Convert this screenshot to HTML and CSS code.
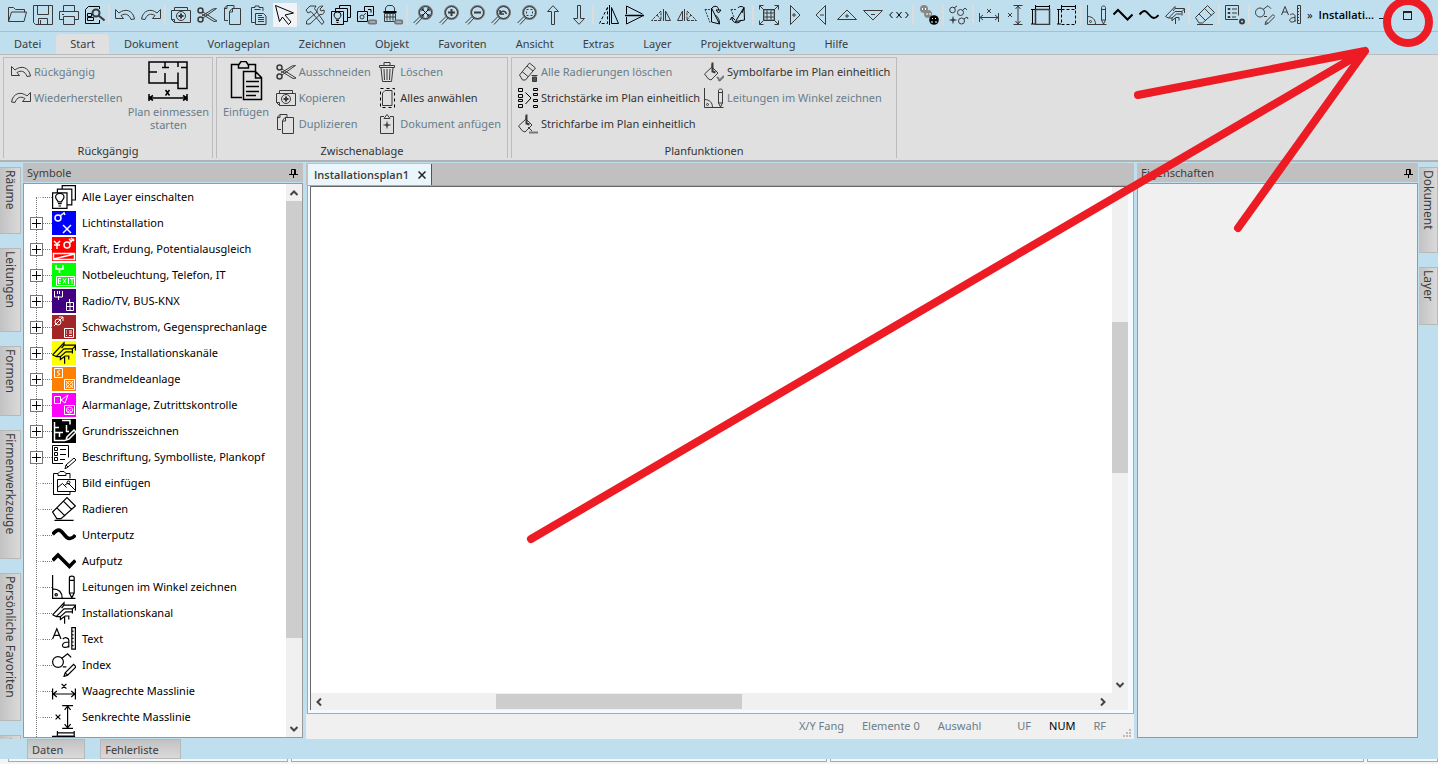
FILE: index.html
```html
<!DOCTYPE html>
<html lang="de">
<head>
<meta charset="utf-8">
<title>Installationsplan1</title>
<link rel="stylesheet" href="styles.css">
</head>
<body>
<svg class="defs" aria-hidden="true">
<symbol id="open" viewBox="0 0 20 20"><path d="M1.500 16.500V2.500h5l2 2h9v3M1.500 16.500l3-9.500h15l-2.500 9.500z"/></symbol>
<symbol id="save" viewBox="0 0 20 20"><path d="M.5.500h19v19H2.500l-2-2zM4.500.500v9h11v-9M5.500 19.500v-6h9v6M7.500 15v4"/></symbol>
<symbol id="print" viewBox="0 0 20 20"><path d="M4.500 6.500v-6h11v6M4.500 14.500h-4v-8h19v8h-4M4.500 11.500h11v8h-11zM3 9.500h2"/></symbol>
<symbol id="preview" viewBox="0 0 20 20"><path d="M14.500 15v3.500H.5v-14l3-3h11V4M2.500 8.500h4v3h-4zM2.500 12.500h6v3h-6z" class="dk"/><circle cx="11" cy="8" r="3.500" class="w2"/><path d="M13.500 10.500l6 5" class="w2"/></symbol>
<symbol id="undo" viewBox="0 0 20 20"><path d="M.5 4.500v9h8l-2.500-3c4-2.500 8-1.500 10 4l3.500-.5C18 5 10 3 4 8z"/></symbol>
<symbol id="redo" viewBox="0 0 20 20"><path d="M19.500 4.500v9h-8l2.500-3c-4-2.500-8-1.500-10 4L.5 14C2 5 10 3 16 8z"/></symbol>
<symbol id="copy" viewBox="0 0 20 20"><path d="M.5 5.500h19v12h-16l-3-3zM3.500 5.500v-3h13v3M.5 14.500h3v3" /><circle cx="10" cy="11" r="4.500"/><path d="M10 8.500v5M7.500 11h5" class="w2"/></symbol>
<symbol id="cut" viewBox="0 0 20 20"><circle cx="3.500" cy="5.500" r="2.500" class="w15"/><circle cx="3.500" cy="14.500" r="2.500" class="w15"/><path d="M6 7l14 9-3 .5L5 9M6 13L19.500 3.500 16 4 5 11"/></symbol>
<symbol id="dup" viewBox="0 0 20 20"><path d="M5 15.500H1.500V3l2.500-2.500h7V4M6.500 6.500l2.500-3h8.500v16h-11zM6.500 7h3V3.500M1.500 3.500H4v-3"/></symbol>
<symbol id="paste" viewBox="0 0 20 20"><path d="M6 17.500H2.500v-15H6V1h4v1.500h4V6M5.500 4.500h6M6.500 8.500h8l2.500 2.500v8.500H6.500zM9 10.500h4M9 12.500h6M9 14.500h6M9 16.500h6"/></symbol>
<symbol id="cursor" viewBox="0 0 20 20"><path d="M.5.500l4 16 3-4.500 6 7.500 2.500-2.500-6-7 8.500-2z" class="dk"/></symbol>
<symbol id="tools" viewBox="0 0 20 20"><path d="M1 5l4-4h6l-1.500 2.500L19 17l-2 2.500L6 6.500 3 8zM18 1l-3 3 1 2 3-1c1 3-1 5-4 4.500L5 19H1.500v-3L12 7c0-4 2-6 6-6z"/></symbol>
<symbol id="layers" viewBox="0 0 20 20"><path d="M.5 6.500h12v13H.5zM4.500 6V3.500h12v13H13M8.500 3V.5h11v12H17" class="dk"/><path d="M5 14c0-1-2-2-2-4a3.500 3 0 0 1 7 0c0 2-2 3-2 4zM5 15.500h3M5.500 17.500h2" class="dk"/></symbol>
<symbol id="laylock" viewBox="0 0 20 20"><path d="M.5 6.500h10v10H.5zM7.500 6V1.500h9v9H11M11 4.500h3v3" class="dk"/><circle cx="5" cy="12" r="2"/><path d="M6.500 10.500L9 8"/><rect x="11.500" y="15.500" width="8" height="3" rx="1.500" class="g w2"/></symbol>
<symbol id="lock" viewBox="0 0 20 20"><path d="M2.500 6V3l2-2.500h5l2 2.500v3M1.500 8.500h11v8h-11zM4 8.500v7M7 8.500v7M10 8.500v7M2 12h10"/><path d="M.5 7h13" class="bold"/><rect x="12" y="15.500" width="7.500" height="3" rx="1.500" class="g w2"/></symbol>
<symbol id="glass" viewBox="0 0 20 20"><circle cx="12.500" cy="7.500" r="6.500" class="g w2"/><circle cx="12.500" cy="7.500" r="6"/><path d="M7 11.500L.5 18M9 13l-6 6.500"/></symbol>
<symbol id="zfit" viewBox="0 0 20 20"><use href="#glass"/><path d="M9.500 4.500l6 6M15.500 4.500l-6 6M9 6V4h2M14 4h2v2M16 9v2h-2M11 11H9V9" class="dk"/></symbol>
<symbol id="zin" viewBox="0 0 20 20"><use href="#glass"/><path d="M9 7.500h7M12.500 4v7" class="w2"/></symbol>
<symbol id="zout" viewBox="0 0 20 20"><use href="#glass"/><path d="M9 7.500h7" class="w2"/></symbol>
<symbol id="zback" viewBox="0 0 20 20"><use href="#glass"/><path d="M9 5v4h4M9.500 8c2-3 5-2 6 1" class="w15"/></symbol>
<symbol id="zsel" viewBox="0 0 20 20"><use href="#glass"/><rect x="9.500" y="4.500" width="6" height="6" stroke-dasharray="2 2"/></symbol>
<symbol id="up" viewBox="0 0 20 20"><path d="M8.500 19.500v-13h-4L10 .7l5.500 5.800h-4v13z"/></symbol>
<symbol id="down" viewBox="0 0 20 20"><path d="M8.500.500v13h-4l5.500 5.800 5.500-5.800h-4V.500z"/></symbol>
<symbol id="mirh" viewBox="0 0 20 20"><path d="M10.500 0v20M12.500 2.500l7 16h-7z" class="dk"/><path d="M8.500 2.500l-8 16h8z" stroke-dasharray="3 2" class="dk"/></symbol>
<symbol id="mirv" viewBox="0 0 20 20"><path d="M0 10.500h19" class="dk w15"/><path d="M1.500 9V1l16 8M1.500 12v7l16-8" class="dk"/></symbol>
<symbol id="mirl" viewBox="0 0 20 20"><path d="M12.500 4v12M14.500 6l5 9.500h-5z"/><path d="M10 6L.5 15.500H10zM6 10l4 5" stroke-dasharray="3 1"/></symbol>
<symbol id="mirr" viewBox="0 0 20 20"><path d="M7.500 4v12M5.500 6l-5 9.500h5z"/><path d="M10 6l9.500 9.500H10zM14 10l-4 5" stroke-dasharray="3 1"/></symbol>
<symbol id="rotl" viewBox="0 0 20 20"><path d="M2 4.500h6M2 4.500l5 13" stroke-dasharray="2 1"/><path d="M8.500 3v14l8 2zM9 3c2-3 7-2 6.500 2M13 5h5l-2.500 3zM12.500 10c2 2 4 4 4 9" class="dk"/></symbol>
<symbol id="rotr" viewBox="0 0 20 20"><path d="M2 4.500h6M2 4.500l3 8" stroke-dasharray="2 1"/><path d="M15 2.500L6.500 16.500l9-1.500zM9 3c1-2 5-2 6 0l-2 5M3 13c0 6 8 6 9 2M1 15l2-3 3 3" class="dk"/></symbol>
<symbol id="scale" viewBox="0 0 20 20"><path d="M.5 4.500v-4h4M.5.500l5 5M15.500.500h4v4M19.500.500l-5 5M.5 15.500v4h4M.5 19.500l5-5M19.500 15.500v4h-4M19.500 19.500l-5-5M4.500 4.500h11v11h-11zM8 4v12M12 4v12M4 8h12M4 12h12"/><path d="M5.500 5.500h9v9h-9z" class="g" stroke-dasharray="1 1"/></symbol>
<symbol id="t-r" viewBox="0 0 20 20"><path d="M5.500.500v19l9.500-9.500zM7 10h4M9 8v4"/></symbol>
<symbol id="t-l" viewBox="0 0 20 20"><path d="M14.500.500v19L5 10zM9 10h4"/></symbol>
<symbol id="t-u" viewBox="0 0 20 20"><path d="M.5 14.500h19L10 5zM10 9v4M8 11h4"/></symbol>
<symbol id="t-d" viewBox="0 0 20 20"><path d="M.5 5.500h19L10 15zM8 9.500h4"/></symbol>
<symbol id="mid" viewBox="0 0 20 20"><path d="M3.500 7L.7 10l2.800 3M16.500 7l2.800 3-2.800 3M7.500 7l5 6M12.500 7l-5 6" class="dk"/></symbol>
<symbol id="dots" viewBox="0 0 20 20"><circle cx="5" cy="4" r="4" class="fg"/><circle cx="9" cy="9" r="4" class="fg"/><circle cx="15" cy="15" r="4.800" class="fk"/><path d="M3.500 3v2M6.500 3v2M8 8v2M11 8v2" class="w"/><path d="M13.500 13v1M16.500 13v1M12 17h2M16 17h2" class="w"/></symbol>
<symbol id="links" viewBox="0 0 20 20"><circle cx="3.500" cy="5" r="2.800"/><circle cx="11.500" cy="7.500" r="3"/><circle cx="12.500" cy="16" r="3"/><path d="M5 3l3-2M13.500 5.500L16 3l2 2M15 14l3-2 1 2M.5 15h7M4 11.500v7M3 14h2v2H3z"/></symbol>
<symbol id="dimh" viewBox="0 0 20 20"><path d="M.5 8v9M19.500 8v9M1 12.500h18M4 10l-3 2.500L4 15M16 10l3 2.500L16 15M8 4l4 4M12 4L8 8"/></symbol>
<symbol id="dimv" viewBox="0 0 20 20"><path d="M8.500.500h9M8.500 19.500h9M13 1v18M10.500 4L13 1l2.500 3M10.500 16l2.500 3 2.500-3M3 8l4 4M7 8l-4 4"/></symbol>
<symbol id="dimr" viewBox="0 0 20 20"><path d="M4.500 4.500h14v15h-14z" class="w15"/><path d="M1.500 4v15M0 4.500h4M0 19h4M4 1.500h15M4.500 0v4M18.500 0v4" class="dk"/></symbol>
<symbol id="dimd" viewBox="0 0 20 20"><path d="M4.500 4.500h14v15h-14z" class="dk" stroke-dasharray="3 2"/><path d="M1.500 4v15M0 4.500h4M0 19h4M4 1.500h15M4.500 0v4M18.500 0v4" class="dk"/></symbol>
<symbol id="angle" viewBox="0 0 20 20"><path d="M.5 0v19.500h19M.5 11.500c5 0 8 3 8 8M14.500 2.500c0-2 4-2 4 0V15l-2 4-2-4zM14.500 4.500h4M14.500 15h4"/><circle cx="3.500" cy="16.500" r="1"/></symbol>
<symbol id="zig" viewBox="0 0 20 20"><path d="M.5 9.500L5 5l9.500 9.500 5-5" class="bold"/></symbol>
<symbol id="wave" viewBox="0 0 20 20"><path d="M.5 9.500C5 4 7 5.500 10 9.500s6 5 9.500.5" class="bold"/></symbol>
<symbol id="duct" viewBox="0 0 20 20"><path d="M.5 11.500L10 1.500v2h9.500v4.500M.5 11.500l3 1.500 6.500-6.500h7v4M3.500 13h3.500v3M7 13l4.500-4h5M7 15.500l4-3h3v3M10.500 13v6M10 3.500L8 6M19.500 4L17 6.500"/></symbol>
<symbol id="eraser" viewBox="0 0 20 20"><path d="M.5 12.500L12.500.500l7 7-12 10.500h-3.500zM4 9l7 7M9.500 3.500l7 7M2 19.500h16"/></symbol>
<symbol id="erasebin" viewBox="0 0 20 20"><path d="M1.500 13L11.500 1l6 5-10 12h-3zM4 9.500l6 5M9 4l6 5"/><path d="M14.500 15h4v4.500h-4z" class="fg2"/><path d="M13.500 13.500h6"/></symbol>
<symbol id="list" viewBox="0 0 20 20"><path d="M13 14.500H.5V.500h13v10M3 3.500h2v1H3zM3 7.500h2v1H3zM3 11.500h2v1H3zM7 4h5M7 8h5M7 12h4"/><circle cx="17" cy="16.500" r="2" class="w2"/></symbol>
<symbol id="index" viewBox="0 0 20 20"><circle cx="5" cy="7.500" r="4.500"/><path d="M8 4.500L13 .7l3 3M9 11.500h3M10 19.500l1-3 7-7 2 2-7 7zM11 16.500l2 2"/></symbol>
<symbol id="text" viewBox="0 0 20 20"><path d="M.5 10L4 1.500 7.500 10M2 7h4M9 10c2-2 5-1 5 1v6M14 12.500c-7 0-6 5-3 4.500 2 0 3-1 3-2M16.500.500h3v18h-3zM17 3.500h1M17 6.500h1M17 9.500h1M17 12.500h1M17 15.500h1" /></symbol>
<symbol id="trash" viewBox="0 0 20 20"><path d="M2.500 3.500h15v2h-15zM7 3V.500h6V3M4 6l1.500 13.500h9L16 6M7 7l.5 11M10 7v11M13 7l-.5 11"/></symbol>
<symbol id="selall" viewBox="0 0 20 20"><path d="M5.500 5l2.500-2.500h7v15h-9.500z"/><path d="M3.500.500h14v19h-14z" stroke-dasharray="3 3" class="dk"/></symbol>
<symbol id="docadd" viewBox="0 0 20 20"><path d="M7 2.500H3.500v17h13v-17H13M7 4.500l3-4 3 4z"/><path d="M10 7.500v7M6.500 11h7M9 10h2v2H9z"/></symbol>
<symbol id="widths" viewBox="0 0 20 20"><path d="M.5.500h4v3h-4zM.5 6.500h4v3h-4zM.5 11.500h4v2h-4zM.5 16.500h4v3h-4zM15.500.500h4v2h-4zM15.500 5.500h4v2h-4zM15.500 11.500h4v2h-4zM15.500 17.500h4v2h-4zM7.500 4.500l5.500 5.500-5.500 6" class="dk"/></symbol>
<symbol id="bucket" viewBox="0 0 20 20"><path d="M.5 12L8 5l6 6-7 7-2.500-1zM8 5v-3M10 13l4 4"/><path d="M8.500.500v9l3 1" class="w2"/><path d="M11 18.500h9" class="w2 g"/></symbol>
<symbol id="bucket2" viewBox="0 0 20 20"><path d="M.5 12L8 5l6 6-7 7-2.500-1zM8 5v-3"/><path d="M8.500.500v9l3 1" class="w2"/><path d="M13 15l2 2M15 19l5-5M14 18l3 0" class="w2 g"/></symbol>
<symbol id="pic" viewBox="0 0 24 24"><path d="M4.500 23.500h-3v-21H6l2-2h4l2 2h4v5M6 2.500v2h8v-2M18 21v2.500H1.500M5.500 8.500h18v12h-18zM5.500 16.500l5-4 4 4M13 14l3-2 7.500 7.500"/><circle cx="16.500" cy="11.500" r="1.500"/></symbol>
<symbol id="note" viewBox="0 0 24 24"><path d="M11 18.500H.5V.500h16v12M2.500 2.500h3v3h-3zM2.500 7.500h3v3h-3zM2.500 12.500h3v3h-3zM8 4.500h6M8 9.500h6M8 14.500h5M13 24l1-4 8-7 2 2-8 7zM14 20l2 2"/></symbol>
<symbol id="pin" viewBox="0 0 9 10"><path d="M2.500 6V1.500h4V6M5.500 1v5M0 6.500h9M4.500 7v3" class="dk"/></symbol>
<symbol id="plan" viewBox="0 0 40 40"><path d="M1 1h38v26.500h-9V22H1zM1 11h8M17 1v6M17 12v10M14 6.500h7M30 1v5M30 11.500V22M33 6.500h6" class="bold2"/><path d="M1 37h38M1 33v7M39 33v7M5 34.500L1 37l4 2.500M35 34.500l4 2.500-4 2.500M17.500 29l4 5.500M21.500 29l-4 5.500" class="bold2"/></symbol>
<symbol id="bigpaste" viewBox="0 0 40 40"><path d="M16 36.500H5.500v-33H13l2-3h5l2 3h7.500v8M12.500 3v4h10V3M17.500 10.500h12l6 6v22h-18zM29.500 11v6h6M20 20.500h13M20 25.500h13M20 30.500h13M20 34.500h10" class="bold2"/></symbol>
<symbol id="c1" viewBox="0 0 24 24"><path d="M0 0h24v24H0z" fill="#00f"/><circle cx="6" cy="7" r="3" class="w w15"/><path d="M8 5l4-3 1 2M11 14l8 8M19 14l-8 8" class="w w15"/></symbol>
<symbol id="c2" viewBox="0 0 24 24"><path d="M0 0h24v24H0z" fill="#f00"/><circle cx="15" cy="8" r="3" class="w w15"/><path d="M2 4l3 3 3-3M5 7v5M2 8h6M17 6l5-4M17 2l3 3M19 1l3 3M1.500 16.500h21v6h-21zM1.500 22l21-5" class="w w15"/></symbol>
<symbol id="c3" viewBox="0 0 24 24"><path d="M0 0h24v24H0z" fill="#0f0"/><path d="M4 2v4h7V2M7.500 6v4" class="w w15"/><path d="M4.500 13.500h18v9h-18zM9 15.500H6.500v5H9M6.500 18H9M11 15.500l3 5M14 15.500l-3 5M16.500 15v6M18 15.500h4M20 15.500V21" class="w"/></symbol>
<symbol id="c4" viewBox="0 0 24 24"><path d="M0 0h24v24H0z" fill="#400080"/><path d="M2.500 2v6h8V2M6.500 7v4M5.500 2v3M7.500 2v3M17.500 10v4M14.500 13.500h7v8h-7zM14 17.500h8M18 13v9" class="w"/></symbol>
<symbol id="c5" viewBox="0 0 24 24"><path d="M0 0h24v24H0z" fill="#a32626"/><circle cx="6" cy="7" r="3" class="w"/><path d="M2 11l9-9v4M7 2h4M12.500 13.500h9v9h-9zM14 16h1M17 16h3M14 18h1M17 18h3M14 20.500h1M17 20.500h3" class="w"/></symbol>
<symbol id="c6" viewBox="0 0 20 20"><path d="M0 0h20v20H0z" fill="#ff0"/><use href="#duct"/></symbol>
<symbol id="c7" viewBox="0 0 24 24"><path d="M0 0h24v24H0z" fill="#ff8000"/><path d="M2.500 1.500h8v9h-8zM8 3L5 5l3 2-3 2M12.500 12.500h10v10h-10zM14 14l7 7M21 14l-7 7" class="w"/><circle cx="17.500" cy="17.500" r="3" class="w"/></symbol>
<symbol id="c8" viewBox="0 0 24 24"><path d="M0 0h24v24H0z" fill="#f0f"/><path d="M2.500 3.500h6v7h-6zM9 7l7-5-3 8zM12.500 12.500h10v9h-10zM16 16l3 3M19 16l-3 3" class="w"/><circle cx="17.500" cy="17" r="3" class="w"/></symbol>
<symbol id="c9" viewBox="0 0 24 24"><path d="M0 0h24v24H0z" fill="#000"/><path d="M2.500 3v18.500H13M2 8.500h5M10 1.500h8v4M7.500 14v4M14.500 6v7M3 13.500h8M14 12.500h3M14 21l1-3 7-7 2 2-7 7z" class="w w15"/></symbol>
</svg>

<header class="toolbar" id="bar"></header>

<nav class="menu">
<button>Datei</button><button class="active">Start</button><button>Dokument</button><button>Vorlageplan</button><button>Zeichnen</button><button>Objekt</button><button>Favoriten</button><button>Ansicht</button><button>Extras</button><button>Layer</button><button>Projektverwaltung</button><button>Hilfe</button>
</nav>

<section class="ribbon">
<div class="group g-undo">
 <div class="cols">
  <div class="col"><button><svg><use href="#undo"/></svg>Rückgängig</button><button><svg><use href="#redo"/></svg>Wiederherstellen</button></div>
  <button class="big"><svg><use href="#plan"/></svg><span>Plan einmessen<br>starten</span></button>
 </div>
 <h2>Rückgängig</h2>
</div>
<div class="group g-clip">
 <div class="cols">
  <button class="big"><svg><use href="#bigpaste"/></svg><span>Einfügen</span></button>
  <div class="col"><button><svg><use href="#cut"/></svg>Ausschneiden</button><button><svg><use href="#copy"/></svg>Kopieren</button><button><svg><use href="#dup"/></svg>Duplizieren</button></div>
  <div class="col"><button><svg><use href="#trash"/></svg>Löschen</button><button class="on"><svg><use href="#selall"/></svg>Alles anwählen</button><button><svg><use href="#docadd"/></svg>Dokument anfügen</button></div>
 </div>
 <h2>Zwischenablage</h2>
</div>
<div class="group g-plan">
 <div class="cols">
  <div class="col"><button><svg><use href="#erasebin"/></svg>Alle Radierungen löschen</button><button class="on"><svg><use href="#widths"/></svg>Strichstärke im Plan einheitlich</button><button class="on"><svg><use href="#bucket"/></svg>Strichfarbe im Plan einheitlich</button></div>
  <div class="col"><button class="on"><svg><use href="#bucket2"/></svg>Symbolfarbe im Plan einheitlich</button><button><svg><use href="#angle"/></svg>Leitungen im Winkel zeichnen</button></div>
 </div>
 <h2>Planfunktionen</h2>
</div>
</section>

<main class="work">
<nav class="side left"><button>Räume</button><button>Leitungen</button><button>Formen</button><button>Firmenwerkzeuge</button><button>Persönliche Favoriten</button><button>C</button></nav>

<aside class="panel symbols">
 <h3>Symbole<svg class="pin"><use href="#pin"/></svg></h3>
 <div class="list">
  <ul class="tree" id="tree"></ul>
  <div class="vscroll"><button aria-label="Nach oben"><svg viewBox="0 0 10 10"><path d="M1.500 7L5 3.500 8.500 7"/></svg></button><div class="thumb full"></div><button aria-label="Nach unten"><svg viewBox="0 0 10 10"><path d="M1.500 3L5 6.500 8.500 3"/></svg></button></div>
 </div>
</aside>

<section class="doc">
 <div class="tabs"><div class="tab">Installationsplan1<button aria-label="Schliessen"><svg viewBox="0 0 8 8"><path d="M.5.500l7 7M7.500.500l-7 7"/></svg></button></div></div>
 <div class="sheet">
  <div class="canvas"></div>
  <div class="vscroll"><div class="thumb page"></div><button aria-label="Nach unten"><svg viewBox="0 0 10 10"><path d="M1.500 3L5 6.500 8.500 3"/></svg></button></div>
  <div class="hscroll"><button aria-label="Nach links"><svg viewBox="0 0 10 10"><path d="M7 1.500L3.500 5 7 8.500"/></svg></button><div class="track"><div class="thumb"></div></div><button aria-label="Nach rechts"><svg viewBox="0 0 10 10"><path d="M3 1.500L6.500 5 3 8.500"/></svg></button></div>
 </div>
 <footer class="status"><span class="s1">X/Y Fang</span><span class="s2">Elemente 0</span><span class="s3">Auswahl</span><span class="s4">UF</span><span class="s5">NUM</span><span class="s6">RF</span><svg class="grip" viewBox="0 0 8 8"><path d="M6 0h2v2H6zM3 3h2v2H3zM6 3h2v2H6zM0 6h2v2H0zM3 6h2v2H3zM6 6h2v2H6z"/></svg></footer>
</section>

<aside class="panel props">
 <h3>Eigenschaften<svg class="pin"><use href="#pin"/></svg></h3>
 <div class="list"></div>
</aside>

<nav class="side right"><button>Dokument</button><button>Layer</button></nav>
</main>

<nav class="bottom"><button>Daten</button><button>Fehlerliste</button></nav>
<div class="edge"><i class="e1"></i><i class="e2"></i><i class="e3"></i><i class="e4"></i></div>

<svg class="mark" width="918" height="560" viewBox="520 0 918 560"><circle cx="1408" cy="22" r="21"/><path d="M531 539L1365 51M1138 95L1365 51L1238 228"/></svg>
<script src="ui.js"></script>
</body>
</html>
```

FILE: ui.js
```js
const icon = id => `<svg><use href="#${id}"/></svg>`;
const groups = [
  'open save print preview', 'undo redo', 'copy cut dup paste cursor',
  'tools layers laylock lock', 'zfit zin zout zback zsel up down',
  'mirh mirv mirl mirr rotl rotr', 'scale t-r t-l t-u t-d mid',
  'dots', 'links', 'dimh dimv dimr dimd', 'angle zig wave duct',
  'eraser', 'list', 'index text'
];
document.getElementById('bar').innerHTML = groups.map(g =>
  g.split(' ').map(n => `<button aria-label="${n}" class="${n}">${icon(n)}</button>`).join('')
).join('<i class="sep"></i>') +
  '<span class="more">»</span><strong>Installati...</strong>' +
  '<span class="win"><button aria-label="Minimieren" class="min"></button>' +
  '<button aria-label="Maximieren" class="max"></button></span>';

const rows = [
  ['layers', 'Alle Layer einschalten'],
  ['c1', 'Lichtinstallation', 1],
  ['c2', 'Kraft, Erdung, Potentialausgleich', 1],
  ['c3', 'Notbeleuchtung, Telefon, IT', 1],
  ['c4', 'Radio/TV, BUS-KNX', 1],
  ['c5', 'Schwachstrom, Gegensprechanlage', 1],
  ['c6', 'Trasse, Installationskanäle', 1],
  ['c7', 'Brandmeldeanlage', 1],
  ['c8', 'Alarmanlage, Zutrittskontrolle', 1],
  ['c9', 'Grundrisszeichnen', 1],
  ['note', 'Beschriftung, Symbolliste, Plankopf', 1],
  ['pic', 'Bild einfügen'], ['eraser', 'Radieren'], ['wave', 'Unterputz'],
  ['zig', 'Aufputz'], ['angle', 'Leitungen im Winkel zeichnen'],
  ['duct', 'Installationskanal'], ['text', 'Text'], ['index', 'Index'],
  ['dimh', 'Waagrechte Masslinie'], ['dimv', 'Senkrechte Masslinie'], ['dimr', '']
];
document.getElementById('tree').innerHTML = rows.map(([i, t, open]) =>
  `<li>${open ? '<button class="plus" aria-label="Aufklappen"></button>' : '<i class="stem"></i>'}<i class="dash"></i>${icon(i)}<span>${t}</span></li>`
).join('');
```

FILE: styles.css
```css
* { box-sizing: border-box; }
body {
  margin: 0; height: 100vh; overflow: hidden; position: relative;
  display: flex; flex-direction: column;
  background: #c0dfee; color: #3c3c3c;
  font: 11px/14px "Noto Sans", "Open Sans", sans-serif;
}
button { font: inherit; color: inherit; background: none; border: 0; padding: 0; margin: 0; }
svg { fill: none; stroke: #3a3a3a; stroke-width: 1; flex: none; }
h2, h3 { margin: 0; font: inherit; }
.defs { position: absolute; width: 0; height: 0; }
.dk { stroke: #000; }
.g { stroke: #777; }
.w { stroke: #fff; }
.w15 { stroke-width: 1.5; }
.w2 { stroke-width: 2; }
.bold { stroke: #000; stroke-width: var(--bold, 2); }
.bold2 { stroke: #000; stroke-width: 1.5; }
.fg { fill: #888; stroke: none; }
.fk { fill: #000; stroke: none; }
.fg2 { fill: #555; }
symbol > path[fill] { stroke: none; }

.toolbar { display: flex; align-items: center; height: 32px; padding: 0 0 1px 4px; border-bottom: 1px solid #b4bcc2; flex: none; white-space: nowrap; }
.toolbar > button { width: 26px; height: 24px; display: grid; place-items: center; flex: none; }
.toolbar > button svg { width: 20px; height: 20px; }
.toolbar > .cursor { background: #f0f4f8; background-clip: content-box; padding: 0 1px; }
.sep { width: 4px; height: 20px; border-left: 2px solid #dcdcdc; flex: none; }
.more { padding: 0 6px 0 3px; color: #111; }
.toolbar strong { color: #000; font-family: "Open Sans", sans-serif; font-weight: 600; }
.win { margin-left: auto; display: flex; gap: 16px; padding-right: 26px; }
.min { width: 8px; height: 8px; border-bottom: 1px solid #222; }
.max { width: 9px; height: 9px; border: 1px solid #222; border-top-width: 2px; }

.menu { display: flex; gap: 1px; height: 22px; padding: 2px 0 0; flex: none; }
.menu button { padding: 0 14px; }
.menu .active { background: #e0e0e0; border-radius: 4px 4px 0 0; }

.ribbon { display: flex; gap: 3px; padding: 2px 3px 2px; height: 108px; flex: none; background: #e0e0e0; border-top: 1px solid #bbb; border-bottom: 2px solid #b2b2b2; }
.group { display: flex; flex-direction: column; border: 1px solid #bcbcbc; border-bottom: 0; color: #687d8a; }
.g-undo { width: 210px; }
.g-clip { width: 292px; }
.g-plan { width: 386px; }
.cols { display: flex; flex: 1; padding: 1px 6px 0; }
.g-undo .cols { justify-content: space-between; padding: 1px 3px 0 7px; }
.g-clip .cols { justify-content: space-between; }
.g-plan .cols { gap: 4px; }
.col button { display: flex; align-items: center; gap: 3px; height: 26px; white-space: nowrap; }
.col svg { width: 20px; height: 20px; }
.group .on, .group h2 { color: #333; }
.group h2 { text-align: center; }
.big { display: flex; flex-direction: column; align-items: center; gap: 4px; align-self: start; padding-top: 2px; line-height: 13px; }
.big svg { width: 40px; height: 40px; }

.work { flex: 1; min-height: 0; display: flex; padding-top: 1px; }
.side { width: 21px; flex: none; display: flex; flex-direction: column; align-items: stretch; gap: 14px; padding-top: 4px; overflow: hidden; }
.side button { writing-mode: vertical-rl; padding: 2px 0 22px; min-height: 58px; font-size: 12px; line-height: 17px; text-align: left; flex: none; border: 1px solid #b8b8b8; border-left: 0; background: linear-gradient(90deg, #c2c2c2, #dadada); }
.side.left button { padding-bottom: 23px; }
.side.right { width: 19px; }
.panel { display: flex; flex-direction: column; flex: none; gap: 1px; }
.panel h3 { display: flex; align-items: center; justify-content: space-between; height: 19px; padding: 1px 5px 0 4px; background: #c0c0c0; }
.pin { width: 9px; height: 10px; }
.panel .list { flex: 1; min-height: 0; display: flex; border: 1px solid #999; }
.symbols { width: 280px; margin-left: 2px; padding-bottom: 1px; }
.symbols .list { background: #fff; color: #000; }
.props { width: 281px; margin: 0 1px 1px 3px; }
.props .list { background: #f0f0f0; }
.tree { position: relative; flex: 1; margin: 0; padding: 0; list-style: none; overflow: hidden; }
.tree::before { content: ""; position: absolute; left: 12px; top: 13px; bottom: 0; border-left: 1px dotted #777; }
.tree li { display: flex; align-items: center; height: 26px; padding-left: 6px; }
.tree li svg { --bold: 3; width: 24px; height: 24px; stroke: #000; }
.tree span { padding-left: 6px; white-space: nowrap; }
.plus { position: relative; width: 13px; height: 13px; border: 1px solid #777; background: linear-gradient(#000, #000) center/9px 1px no-repeat, linear-gradient(#000, #000) center/1px 9px no-repeat, #fff; }
.stem { width: 13px; height: 1px; background: none; border-top: 1px dotted #777; clip-path: inset(0 0 0 6px); }
.dash { width: 9px; border-top: 1px dotted #777; }

.vscroll { display: flex; flex-direction: column; width: 16px; background: #f0f0f0; flex: none; }
.vscroll button, .hscroll button { width: 16px; height: 17px; display: grid; place-items: center; }
.vscroll button svg, .hscroll button svg { width: 10px; height: 10px; stroke: #444; stroke-width: 2; }
.thumb { background: #cdcdcd; }
.full { height: 79%; }
.vscroll button:last-child { margin-top: auto; }

.doc { flex: 1; min-width: 0; display: flex; flex-direction: column; margin-left: 3px; }
.tabs { height: 22px; padding: 1px 0 0 2px; background: #c0c0c0; display: flex; flex: none; }
.tab { display: flex; align-items: center; gap: 9px; padding: 0 5px 0 6px; background: #eaf6fc; border-right: 1px solid #555; font-family: "Open Sans", sans-serif; font-weight: 600; }
.tab button { display: grid; }
.tab svg { width: 8px; height: 8px; stroke: #222; stroke-width: 1.5; }
.sheet { flex: 1; min-height: 0; display: grid; grid-template: 1fr 17px / 1fr 16px; margin-left: 1px; border: solid #f4fafd; border-width: 1px 6px 4px 3px; outline: 1px solid #aaa; outline-offset: -1px; }
.canvas { background: #fff; border-top: 1px solid #666; border-left: 1px solid #666; }
.sheet .vscroll { border-top: 1px solid #666; }
.page { height: 151px; margin-top: 135px; }
.hscroll { grid-column: span 2; display: flex; background: #f0f0f0; border-left: 1px solid #666; }
.track { flex: 1; padding: 1px 0; }
.track .thumb { width: 32%; height: 15px; margin-left: 22%; }
.hscroll button:last-child { margin-right: 17px; }
.status { position: relative; height: 25px; display: flex; justify-content: flex-end; align-items: center; padding: 0 28px 1px 0; background: #f0f0f0; color: #6a7d88; flex: none; }
.status span { margin-left: 18px; }
.status .s4 { margin-left: 36px; }
.status .s5 { color: #000; }
.grip { position: absolute; right: 3px; bottom: 2px; width: 8px; height: 8px; fill: #bbb; stroke: none; }

.bottom { display: flex; gap: 15px; height: 20px; padding-left: 27px; flex: none; }
.bottom button { padding: 1px 21px 0 4px; background: linear-gradient(#c2c2c2, #dadada); border: 1px solid #b8b8b8; }
.edge { display: flex; gap: 3px; height: 5px; padding-left: 8px; flex: none; background: #f4f4f4; border-bottom: 2px solid #f4f4f4; }
.edge i { background: #f2f8fc; border: 1px solid #aaa; border-top: 0; }
.e1 { width: 280px; }
.e2 { width: 536px; }
.e3 { flex: 1; }
.e4 { width: 71px; }

.mark { position: absolute; right: 0; top: 0; stroke: #ed1c24; stroke-width: 8; stroke-linecap: round; stroke-linejoin: round; pointer-events: none; }
```
